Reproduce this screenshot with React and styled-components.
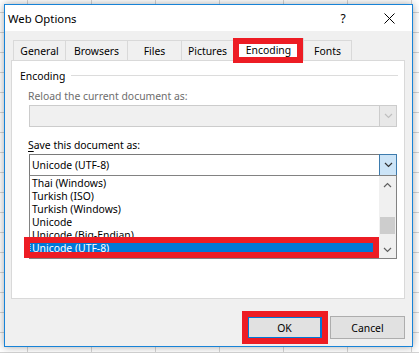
import React from 'react';
import styled, { createGlobalStyle, css } from 'styled-components';

const GlobalStyle = createGlobalStyle`
    html, body {
        margin: 0;
        padding: 0;
        background: #fff;
    }
`;

const Desktop = styled.div`
    width: 419px;
    height: 353px;
    box-sizing: border-box;
    padding: 4px 0 0 4px;
    overflow: hidden;
    background-color: #fff;
    background-image:
        linear-gradient(to bottom, #d4d4d4 1px, transparent 1px),
        linear-gradient(to right, #d4d4d4 1px, transparent 1px);
    background-size: 64px 20px;
    background-position: 27px 12px;
    font-family: "Noto Sans", "Liberation Sans", sans-serif;
    font-size: 10.4px;
    color: #000;
`;

const Dialog = styled.div`
    width: 409px;
    height: 343px;
    box-sizing: border-box;
    border: 1px solid #1883d7;
    background: #f0f0f0;
    box-shadow: 0 0 8px rgba(0, 0, 0, 0.35);
    display: flex;
    flex-direction: column;
`;

const TitleBar = styled.div`
    height: 26px;
    background: #fff;
    display: flex;
    align-items: center;
    padding-left: 3px;
`;

const Title = styled.span`
    flex: 1;
    font-size: 11.3px;
`;

const CaptionButton = styled.span`
    width: 46px;
    height: 26px;
    display: flex;
    align-items: center;
    justify-content: center;
    font-size: 12px;
`;

const Body = styled.div`
    flex: 1;
    padding: 9px 7px 0 6px;
    display: flex;
    flex-direction: column;
`;

const TabStrip = styled.div`
    display: flex;
    align-items: flex-end;
    height: 20px;
    padding-left: 2px;
    position: relative;
    z-index: 2;
`;

const flag = css`
    position: relative;
    &::after {
        content: '';
        position: absolute;
        inset: ${p => p.$flag};
        border: 6px solid #ed1c24;
        pointer-events: none;
        z-index: 5;
    }
`;

const Tab = styled.div`
    width: ${p => p.$w}px;
    height: ${p => (p.$active ? 22 : 20)}px;
    box-sizing: border-box;
    border: 1px solid #d9d9d9;
    border-bottom: none;
    margin-left: -1px;
    background: ${p => (p.$active ? '#fff' : '#f0f0f0')};
    display: flex;
    align-items: center;
    justify-content: center;
    padding-top: ${p => (p.$active ? 1 : 0)}px;
    &:first-child {
        margin-left: 0;
    }
    ${p => p.$flag && flag}
`;

const Panel = styled.div`
    height: 239px;
    box-sizing: border-box;
    border: 1px solid #d9d9d9;
    background: #fff;
    padding: 8px 6px 0 8px;
`;

const GroupHeader = styled.div`
    display: flex;
    align-items: center;
    gap: 6px;
    height: 14px;
`;

const GroupLine = styled.div`
    flex: 1;
    height: 1px;
    background: #dcdcdc;
    margin-top: -1px;
`;

const GroupBody = styled.div`
    padding-left: 8px;
    display: flex;
    flex-direction: column;
`;

const Label = styled.div`
    height: 14px;
    line-height: 14px;
    margin-top: ${p => p.$top}px;
    color: ${p => (p.$disabled ? '#6d6d6d' : '#000')};
    u {
        text-decoration: underline;
        text-underline-offset: 2px;
    }
`;

const Combo = styled.div`
    margin: 2px 0 0 1px;
    width: 368px;
    height: 22px;
    box-sizing: border-box;
    border: 1px solid ${p => (p.$disabled ? '#cccccc' : '#7a7a7a')};
    background: ${p => (p.$disabled ? '#f0f0f0' : '#fff')};
    display: flex;
    align-items: stretch;
`;

const ComboText = styled.span`
    flex: 1;
    padding-left: 2px;
    line-height: 20px;
`;

const DropButton = styled.span`
    width: 18px;
    margin: -1px -1px -1px 0;
    box-sizing: border-box;
    border: 1px solid ${p => (p.$disabled ? '#cccccc' : '#3d7bad')};
    background: ${p => (p.$disabled ? '#e8e8e8' : '#cce4f7')};
    display: flex;
    align-items: center;
    justify-content: center;
`;

const List = styled.div`
    margin: -1px 0 0 1px;
    width: 368px;
    height: 84px;
    box-sizing: border-box;
    border: 1px solid #828282;
    background: #fff;
    display: flex;
`;

const Rows = styled.div`
    flex: 1;
    padding-top: 1px;
`;

const Row = styled.div`
    height: 13px;
    line-height: 13px;
    padding-left: 2px;
    white-space: nowrap;
    background: ${p => (p.$selected ? '#0078d7' : 'transparent')};
    color: ${p => (p.$selected ? '#fff' : '#000')};
    outline: ${p => (p.$selected ? '1px dotted #8cc4ee' : 'none')};
    outline-offset: -1px;
    ${p => p.$flag && flag}
`;

const ScrollBar = styled.div`
    width: 17px;
    background: #f0f0f0;
    display: flex;
    flex-direction: column;
`;

const ScrollArrow = styled.div`
    height: 17px;
    display: flex;
    align-items: center;
    justify-content: center;
`;

const Track = styled.div`
    flex: 1;
    padding: 24px 1px 0;
`;

const Thumb = styled.div`
    height: 17px;
    background: #cdcdcd;
`;

const Footer = styled.div`
    display: flex;
    justify-content: flex-end;
    gap: 8px;
    margin-top: 17px;
`;

const Button = styled.div`
    width: 75px;
    height: 23px;
    box-sizing: border-box;
    border: ${p => (p.$default ? '2px solid #0078d7' : '1px solid #adadad')};
    background: #e1e1e1;
    display: flex;
    align-items: center;
    justify-content: center;
    ${p => p.$flag && flag}
`;

const Chevron = ({ up, color = '#333' }) => (
    <svg width="9" height="6" viewBox="0 0 9 6">
        <polyline
            points={up ? '1,5 4.5,1.5 8,5' : '1,1 4.5,4.5 8,1'}
            fill="none"
            stroke={color}
            strokeWidth="1.2"
        />
    </svg>
);

const CloseIcon = () => (
    <svg width="11" height="11" viewBox="0 0 11 11">
        <path d="M0.5 0.5 L10.5 10.5 M10.5 0.5 L0.5 10.5" stroke="#000" strokeWidth="1" />
    </svg>
);

const tabs = [
    { label: 'General', w: 53 },
    { label: 'Browsers', w: 63 },
    { label: 'Files', w: 55 },
    { label: 'Pictures', w: 53 },
    { label: 'Encoding', w: 71, active: true },
    { label: 'Fonts', w: 49 },
];

const encodings = [
    'Thai (Windows)',
    'Turkish (ISO)',
    'Turkish (Windows)',
    'Unicode',
    'Unicode (Big-Endian)',
    'Unicode (UTF-8)',
];

export default function App() {
    return (
        <>
            <GlobalStyle />
            <Desktop>
                <Dialog>
                    <TitleBar>
                        <Title>Web Options</Title>
                        <CaptionButton>?</CaptionButton>
                        <CaptionButton><CloseIcon /></CaptionButton>
                    </TitleBar>
                    <Body>
                        <TabStrip>
                            {tabs.map(t => (
                                <Tab
                                    key={t.label}
                                    $w={t.w}
                                    $active={t.active}
                                    $flag={t.active ? '-1px 0 -3px -1px' : undefined}
                                >
                                    {t.label}
                                </Tab>
                            ))}
                        </TabStrip>
                        <Panel>
                            <GroupHeader>
                                <span>Encoding</span>
                                <GroupLine />
                            </GroupHeader>
                            <GroupBody>
                                <Label $top={6} $disabled>Reload the current document as:</Label>
                                <Combo $disabled>
                                    <ComboText />
                                    <DropButton $disabled><Chevron color="#bfbfbf" /></DropButton>
                                </Combo>
                                <Label $top={11}><u>S</u>ave this document as:</Label>
                                <Combo>
                                    <ComboText>Unicode (UTF-8)</ComboText>
                                    <DropButton><Chevron /></DropButton>
                                </Combo>
                                <List>
                                    <Rows>
                                        {encodings.map((e, i) => {
                                            const sel = i === encodings.length - 1;
                                            return (
                                                <Row key={e} $selected={sel} $flag={sel ? '-5px 0 -3px -6px' : undefined}>
                                                    {e}
                                                </Row>
                                            );
                                        })}
                                    </Rows>
                                    <ScrollBar>
                                        <ScrollArrow><Chevron up color="#606060" /></ScrollArrow>
                                        <Track><Thumb /></Track>
                                        <ScrollArrow><Chevron color="#606060" /></ScrollArrow>
                                    </ScrollBar>
                                </List>
                            </GroupBody>
                        </Panel>
                        <Footer>
                            <Button $default $flag="-7px -8px -7px -7px">OK</Button>
                            <Button>Cancel</Button>
                        </Footer>
                    </Body>
                </Dialog>
            </Desktop>
        </>
    );
}
